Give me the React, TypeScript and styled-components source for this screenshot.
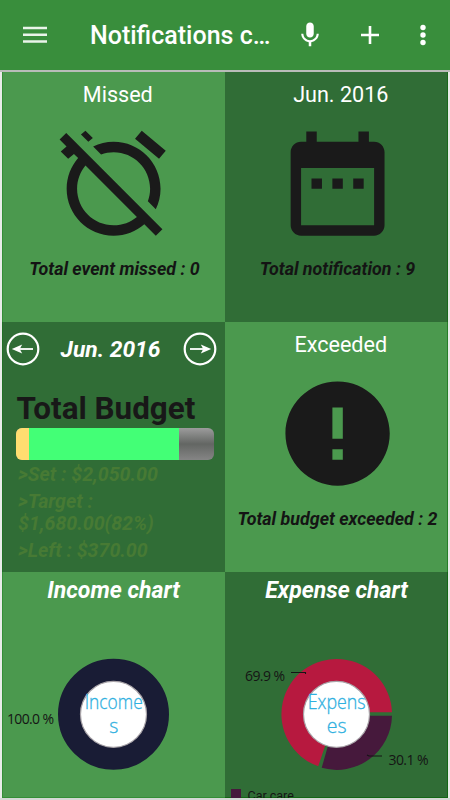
import React from "react";
import styled, { createGlobalStyle } from "styled-components";

const Global = createGlobalStyle`
  * { box-sizing: border-box; }
  body { margin: 0; background: #e9ebe9; font-family: Roboto, "Liberation Sans", sans-serif; overflow: hidden; }
`;

const Screen = styled.div`
  width: 450px;
  height: 800px;
  display: flex;
  flex-direction: column;
  overflow: hidden;
`;

const Toolbar = styled.header`
  height: 70px;
  flex: none;
  display: flex;
  align-items: center;
  background: #398e3c;
`;

const Title = styled.h1`
  margin: 0 0 0 32px;
  width: 195px;
  font-size: 25px;
  font-weight: 500;
  line-height: 30px;
  padding-top: 1px;
  white-space: nowrap;
  color: #fff;
`;

const IconButton = styled.button<{ $width: number }>`
  width: ${(p) => p.$width}px;
  height: 70px;
  padding: 0;
  border: 0;
  background: none;
  display: flex;
  align-items: center;
  justify-content: center;
  svg { display: block; }
`;

const Grid = styled.main`
  flex: none;
  height: 730px;
  display: grid;
  grid-template-columns: 223px 223px;
  grid-template-rows: 250px 250px 226px;
  padding: 0 2px;
  border-top: 2px solid #b9bcb9;
  border-bottom: 2px solid #d5d8d5;
`;

const Tile = styled.section<{ $dark?: boolean }>`
  display: flex;
  flex-direction: column;
  align-items: center;
  overflow: hidden;
  background: ${(p) => (p.$dark ? "#306d36" : "#4b994e")};
  &:nth-child(odd) { box-shadow: inset 1px 0 rgba(0, 120, 0, 0.3); }
  &:nth-child(even) { box-shadow: inset -1px 0 rgba(0, 100, 0, 0.5); }
  &:nth-child(5) { box-shadow: inset 1px -1px rgba(0, 120, 0, 0.3); }
  &:nth-child(6) { box-shadow: inset -1px -1px rgba(0, 100, 0, 0.6); }
`;

const TileTitle = styled.h2`
  margin: 9px 0 0 8.6px;
  height: 28px;
  font-size: 21.6px;
  font-weight: 400;
  line-height: 28px;
  white-space: nowrap;
  text-align: center;
  color: #fff;
`;

const Glyph = styled.svg<{ $shift?: number }>`
  display: block;
  flex: none;
  width: 125.2px;
  height: 125.2px;
  margin: 11.6px 0 0 ${(p) => p.$shift ?? 0}px;
  fill: #1a1a1a;
`;

const Caption = styled.p`
  margin: 11px 0 0 2px;
  font-size: 17.85px;
  font-weight: 700;
  font-style: italic;
  line-height: 24px;
  white-space: nowrap;
  color: #141414;
`;

const MonthBar = styled.div`
  width: 100%;
  height: 54px;
  padding: 0 8px 0 4px;
  display: flex;
  align-items: center;
  justify-content: space-between;
`;

const Month = styled.span`
  padding-top: 1px;
  margin-right: 2px;
  font-size: 22.8px;
  font-weight: 700;
  font-style: italic;
  line-height: 28px;
  color: #fff;
`;

const Budget = styled.div`
  width: 100%;
  padding-left: 14px;
`;

const BudgetTitle = styled.h2`
  margin: 13px 0 0 0.5px;
  font-size: 31.4px;
  font-weight: 700;
  line-height: 39px;
  white-space: nowrap;
  color: #181818;
`;

const Meter = styled.div`
  width: 198px;
  height: 32px;
  display: flex;
  overflow: hidden;
  border-radius: 6px;
  background: linear-gradient(#9c9c9c, #636663 50%, #858585);
`;

const MeterPart = styled.div<{ $width: number; $color: string }>`
  width: ${(p) => p.$width}px;
  background: ${(p) => p.$color};
`;

const Details = styled.div`
  display: flex;
  flex-direction: column;
  gap: 4px;
  padding: 4px 0 0 2px;
`;

const Detail = styled.p`
  margin: 0;
  width: 155px;
  font-size: 19.6px;
  font-weight: 700;
  font-style: italic;
  line-height: 22.7px;
  color: #477a34;
`;

const ChartTitle = styled.h2`
  margin: 5px 0 0;
  height: 27px;
  font-size: 23px;
  font-weight: 700;
  font-style: italic;
  line-height: 28px;
  white-space: nowrap;
  color: #fff;
`;

const Chart = styled.svg`
  display: block;
  flex: none;
  width: 223px;
  height: 194px;
  font-family: "Open Sans", "Noto Sans", sans-serif;
`;

const CenterText = styled.text`
  font-size: 19.5px;
  font-weight: 300;
  text-anchor: middle;
  fill: #2fb0e0;
  stroke: #2fb0e0;
  stroke-width: 0.3px;
`;

const ValueText = styled.text`
  font-size: 14px;
  fill: #151515;
`;

const LegendText = styled.text`
  font-family: Roboto, sans-serif;
  font-size: 12.5px;
  fill: #151515;
`;

const Arrow = ({ back }: { back?: boolean }) => (
  <svg width="34" height="34" viewBox="0 0 34 34">
    <circle cx="17" cy="17" r="15.3" fill="none" stroke="#fff" strokeWidth="2.2" />
    <g transform={back ? "translate(34 0) scale(-1 1)" : undefined}>
      <path d="M7 17H20" stroke="#fff" strokeWidth="1.8" />
      <path d="M17.8 12.6 28.2 17 17.8 21.4 20.2 17Z" fill="#fff" />
    </g>
  </svg>
);

const Donut = ({ lines, children }: { lines: string[]; children: React.ReactNode }) => (
  <>
    {children}
    <circle cx="111.5" cy="110.3" r="33" fill="#fff" stroke="#a8a3a8" strokeWidth="1.2" />
    <CenterText x="111.7" y="105.3" textLength={58} lengthAdjust="spacingAndGlyphs">{lines[0]}</CenterText>
    <CenterText x="111.7" y="129.3">{lines[1]}</CenterText>
  </>
);

export default function App() {
  return (
    <>
      <Global />
      <Screen>
        <Toolbar>
          <IconButton $width={58} aria-label="Menu">
            <svg width="58" height="70" viewBox="0 0 58 70">
              <path d="M23 28H47M23 34.7H47M23 41.5H47" stroke="#e9f4e9" strokeWidth="2.6" />
            </svg>
          </IconButton>
          <Title>Notifications c…</Title>
          <IconButton $width={50} aria-label="Voice">
            <svg width="30" height="30" viewBox="0 0 24 24" fill="#fff">
              <path d="M12 14c1.66 0 2.99-1.34 2.99-3L15 5c0-1.66-1.34-3-3-3S9 3.34 9 5v6c0 1.66 1.34 3 3 3zm5.3-3c0 3-2.54 5.1-5.3 5.1S6.7 14 6.7 11H5c0 3.41 2.72 6.23 6 6.72V21h2v-3.28c3.28-.48 6-3.3 6-6.72h-1.7z" />
            </svg>
          </IconButton>
          <IconButton $width={70} aria-label="Add">
            <svg width="20" height="20" viewBox="0 0 20 20">
              <path d="M1 10H19M10 1V19" stroke="#fff" strokeWidth="2.6" />
            </svg>
          </IconButton>
          <IconButton $width={35} aria-label="More">
            <svg width="10" height="24" viewBox="0 0 10 24" fill="#fff">
              <circle cx="5" cy="4.5" r="2.7" />
              <circle cx="5" cy="12" r="2.7" />
              <circle cx="5" cy="19.5" r="2.7" />
            </svg>
          </IconButton>
        </Toolbar>
        <Grid>
          <Tile>
            <TileTitle>Missed</TileTitle>
            <Glyph $shift={0.8} viewBox="0 0 24 24">
              <path d="M12 6c3.87 0 7 3.13 7 7 0 .84-.16 1.65-.43 2.4l1.52 1.52c.58-1.19.91-2.51.91-3.92 0-4.97-4.03-9-9-9-1.41 0-2.73.33-3.92.91L9.6 6.43C10.35 6.16 11.16 6 12 6zm10-.28l-4.6-3.86-1.29 1.53 4.6 3.86L22 5.72zM2.92 2.29L1.65 3.57 2.98 4.9l-1.11.93 1.42 1.42 1.11-.94.8.8C3.83 8.69 3 10.75 3 13c0 4.97 4.02 9 9 9 2.25 0 4.31-.83 5.89-2.2l2.2 2.2 1.27-1.27L3.89 3.27l-.97-.98zm13.55 16.1C15.26 19.39 13.7 20 12 20c-3.87 0-7-3.13-7-7 0-1.7.61-3.26 1.61-4.47l9.86 9.86zM8.02 3.28L6.6 1.86l-.86.71 1.42 1.42.86-.71z" />
            </Glyph>
            <Caption>Total event missed : 0</Caption>
          </Tile>
          <Tile $dark>
            <TileTitle>Jun. 2016</TileTitle>
            <Glyph $shift={1.4} viewBox="0 0 24 24">
              <path d="M9 11H7v2h2v-2zm4 0h-2v2h2v-2zm4 0h-2v2h2v-2zm2-7h-1V2h-2v2H8V2H6v2H5c-1.1 0-2 .9-2 2v14c0 1.1.9 2 2 2h14c1.1 0 2-.9 2-2V6c0-1.1-.9-2-2-2zm0 16H5V9h14v11z" />
            </Glyph>
            <Caption>Total notification : 9</Caption>
          </Tile>
          <Tile $dark>
            <MonthBar>
              <Arrow back />
              <Month>Jun. 2016</Month>
              <Arrow />
            </MonthBar>
            <Budget>
              <BudgetTitle>Total Budget</BudgetTitle>
              <Meter>
                <MeterPart $width={13} $color="#ffdd70" />
                <MeterPart $width={150} $color="#43ff76" />
              </Meter>
              <Details>
                <Detail>&gt;Set : $2,050.00</Detail>
                <Detail>&gt;Target : $1,680.00(82%)</Detail>
                <Detail>&gt;Left : $370.00</Detail>
              </Details>
            </Budget>
          </Tile>
          <Tile>
            <TileTitle>Exceeded</TileTitle>
            <Glyph $shift={1.4} viewBox="0 0 24 24">
              <path d="M12 2C6.48 2 2 6.48 2 12s4.48 10 10 10 10-4.48 10-10S17.52 2 12 2zm1 15h-2v-2h2v2zm0-4h-2V7h2v6z" />
            </Glyph>
            <Caption>Total budget exceeded : 2</Caption>
          </Tile>
          <Tile>
            <ChartTitle>Income chart</ChartTitle>
            <Chart viewBox="0 0 223 194">
              <Donut lines={["Income", "s"]}>
                <circle cx="111.5" cy="110.3" r="44" fill="none" stroke="#191c35" strokeWidth="23" />
              </Donut>
              <ValueText x="5" y="120" textLength={47}>100.0 %</ValueText>
            </Chart>
          </Tile>
          <Tile $dark>
            <ChartTitle>Expense chart</ChartTitle>
            <Chart viewBox="0 0 223 194">
              <Donut lines={["Expens", "es"]}>
                <path d="M111.5 108.3H167A55.3 55.3 0 1 0 93.2 162.3Z" fill="#b7193f" />
                <path d="M111.5 111.8H167A55.3 55.3 0 0 1 96.7 163.8Z" fill="#46193c" />
              </Donut>
              <path d="M66 68.5H80.5V70M142 151 144 152H157" fill="none" stroke="#151515" strokeWidth="1.1" />
              <ValueText x="20" y="77" textLength={40}>69.9 %</ValueText>
              <ValueText x="163.5" y="161" textLength={40}>30.1 %</ValueText>
              <rect x="6" y="185" width="10" height="10" fill="#46193c" />
              <LegendText x="22.5" y="195.5">Car care</LegendText>
            </Chart>
          </Tile>
        </Grid>
      </Screen>
    </>
  );
}
